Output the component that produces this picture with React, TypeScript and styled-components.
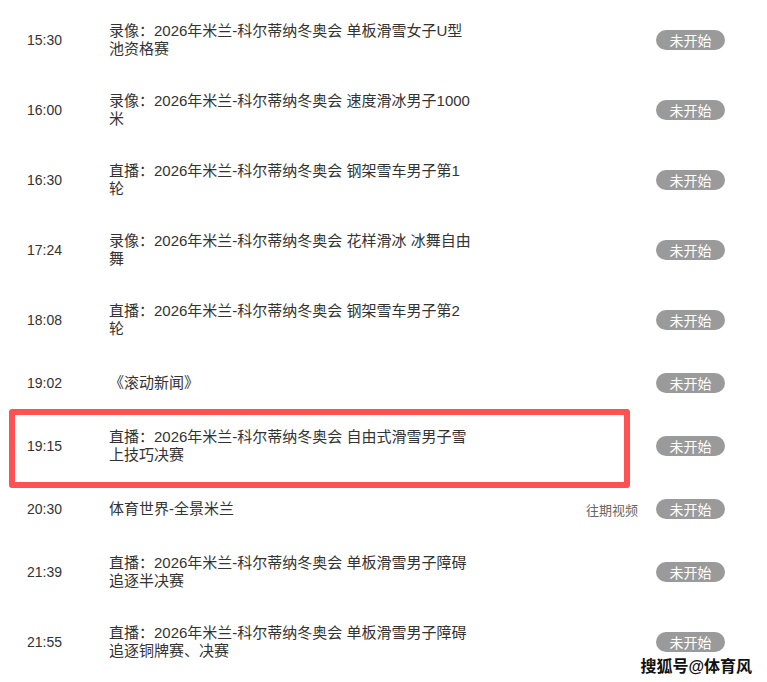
import styled, { createGlobalStyle } from "styled-components";

type Program = {
  time: string;
  title: string;
  extra?: string;
  highlight?: boolean;
};

const programs: Program[] = [
  { time: "15:30", title: "录像：2026年米兰-科尔蒂纳冬奥会 单板滑雪女子U型池资格赛" },
  { time: "16:00", title: "录像：2026年米兰-科尔蒂纳冬奥会 速度滑冰男子1000米" },
  { time: "16:30", title: "直播：2026年米兰-科尔蒂纳冬奥会 钢架雪车男子第1轮" },
  { time: "17:24", title: "录像：2026年米兰-科尔蒂纳冬奥会 花样滑冰 冰舞自由舞" },
  { time: "18:08", title: "直播：2026年米兰-科尔蒂纳冬奥会 钢架雪车男子第2轮" },
  { time: "19:02", title: "《滚动新闻》" },
  {
    time: "19:15",
    title: "直播：2026年米兰-科尔蒂纳冬奥会 自由式滑雪男子雪上技巧决赛",
    highlight: true,
  },
  { time: "20:30", title: "体育世界-全景米兰", extra: "往期视频" },
  { time: "21:39", title: "直播：2026年米兰-科尔蒂纳冬奥会 单板滑雪男子障碍追逐半决赛" },
  { time: "21:55", title: "直播：2026年米兰-科尔蒂纳冬奥会 单板滑雪男子障碍追逐铜牌赛、决赛" },
];

const App = () => {
  return (
    <>
      <GlobalStyle />
      <Page>
        <List>
          {programs.map((item) => (
            <Row key={item.time} $highlight={!!item.highlight}>
              <Time>{item.time}</Time>
              <Title>{item.title}</Title>
              <Spacer />
              {item.extra && <Extra>{item.extra}</Extra>}
              <Badge>未开始</Badge>
            </Row>
          ))}
        </List>
        <Watermark>搜狐号@体育风</Watermark>
      </Page>
    </>
  );
};

const GlobalStyle = createGlobalStyle`
  body {
    margin: 0;
    background: #fff;
    font-family: "Liberation Sans", "Noto Sans CJK SC", sans-serif;
  }
`;

const Page = styled.div`
  position: relative;
  width: 767px;
  height: 682px;
  overflow: hidden;
  background: #fff;
`;

const List = styled.ul`
  list-style: none;
  margin: 0;
  padding: 5px 0 0;
`;

const Row = styled.li<{ $highlight: boolean }>`
  position: relative;
  display: flex;
  align-items: center;
  min-height: 56px;
  padding: 17px 42px 17px 27px;
  box-sizing: border-box;

  ${({ $highlight }) =>
    $highlight &&
    `
    &::after {
      content: "";
      position: absolute;
      top: -2px;
      bottom: -7px;
      left: 9px;
      right: 137px;
      border: 6px solid #fe5252;
      border-radius: 3px;
      pointer-events: none;
    }
  `}
`;

const Time = styled.span`
  flex: none;
  width: 82px;
  font-size: 14px;
  color: #333;
`;

const Title = styled.span`
  width: 364px;
  font-size: 15px;
  line-height: 18px;
  color: #333;
`;

const Spacer = styled.span`
  flex: 1;
`;

const Extra = styled.span`
  margin-right: 18px;
  font-size: 13px;
  color: #666;
`;

const Badge = styled.span`
  flex: none;
  display: flex;
  align-items: center;
  justify-content: center;
  width: 69px;
  height: 20px;
  border-radius: 10px;
  background: #9a9a9a;
  color: #fff;
  font-size: 14px;
`;

const Watermark = styled.div`
  position: absolute;
  top: 653px;
  right: 15px;
  font-size: 16px;
  font-weight: 700;
  color: #111;
  text-shadow: 1px 0 0 #fff, -1px 0 0 #fff, 0 1px 0 #fff, 0 -1px 0 #fff;
`;

export default App;
